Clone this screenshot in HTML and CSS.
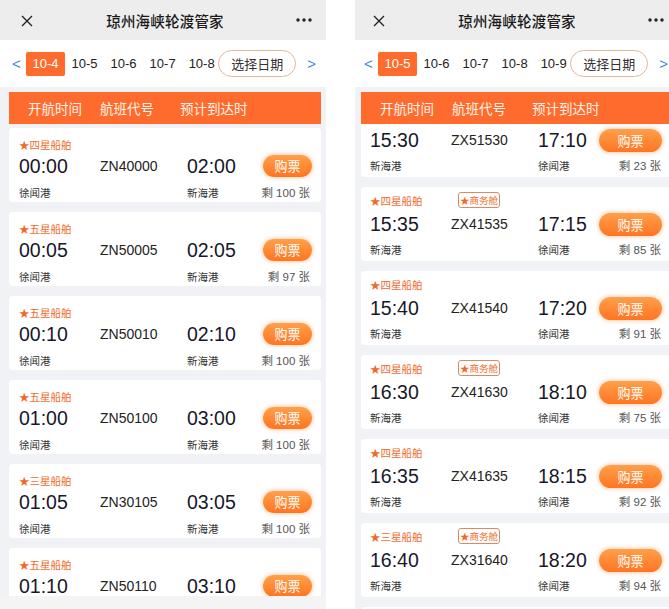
FILE: index.html
```html
<!DOCTYPE html>
<html lang="zh-CN">
<head>
<meta charset="utf-8">
<title>琼州海峡轮渡管家</title>
<link rel="stylesheet" href="styles.css">
</head>
<body>
<div class="screen">
  <div class="phone phone--a">
    <div class="inner">
      <div class="titlebar">
        <svg class="close" width="12" height="12" viewBox="0 0 12 12"><path d="M1 1L11 11M11 1L1 11" stroke="#222" stroke-width="1.4" fill="none"/></svg>
        <div class="title">琼州海峡轮渡管家</div>
        <svg class="more" width="16" height="4" viewBox="0 0 16 4"><circle cx="2" cy="2" r="1.7" fill="#222"/><circle cx="8" cy="2" r="1.7" fill="#222"/><circle cx="14" cy="2" r="1.7" fill="#222"/></svg>
      </div>
      <div class="datebar">
        <span class="arrow prev">&lt;</span>
        <span class="day active">10-4</span>
        <span class="day">10-5</span>
        <span class="day">10-6</span>
        <span class="day">10-7</span>
        <span class="day">10-8</span>
        <span class="pick">选择日期</span>
        <span class="arrow next">&gt;</span>
      </div>
      <div class="thead"><span class="th th1">开航时间</span><span class="th th2">航班代号</span><span class="th">预计到达时</span></div>
      <div class="list">
        <div class="card">
          <div class="r1"><span class="grade">★四星船舶</span></div>
          <div class="r2"><span class="c1 time">00:00</span><span class="c2 code">ZN40000</span><span class="c3 time">02:00</span><span class="buy">购票</span></div>
          <div class="r3"><span class="c1 port">徐闻港</span><span class="c2"></span><span class="c3 port">新海港</span><span class="left">剩 100 张</span></div>
        </div>
        <div class="card">
          <div class="r1"><span class="grade">★五星船舶</span></div>
          <div class="r2"><span class="c1 time">00:05</span><span class="c2 code">ZN50005</span><span class="c3 time">02:05</span><span class="buy">购票</span></div>
          <div class="r3"><span class="c1 port">徐闻港</span><span class="c2"></span><span class="c3 port">新海港</span><span class="left">剩 97 张</span></div>
        </div>
        <div class="card">
          <div class="r1"><span class="grade">★五星船舶</span></div>
          <div class="r2"><span class="c1 time">00:10</span><span class="c2 code">ZN50010</span><span class="c3 time">02:10</span><span class="buy">购票</span></div>
          <div class="r3"><span class="c1 port">徐闻港</span><span class="c2"></span><span class="c3 port">新海港</span><span class="left">剩 100 张</span></div>
        </div>
        <div class="card">
          <div class="r1"><span class="grade">★五星船舶</span></div>
          <div class="r2"><span class="c1 time">01:00</span><span class="c2 code">ZN50100</span><span class="c3 time">03:00</span><span class="buy">购票</span></div>
          <div class="r3"><span class="c1 port">徐闻港</span><span class="c2"></span><span class="c3 port">新海港</span><span class="left">剩 100 张</span></div>
        </div>
        <div class="card">
          <div class="r1"><span class="grade">★三星船舶</span></div>
          <div class="r2"><span class="c1 time">01:05</span><span class="c2 code">ZN30105</span><span class="c3 time">03:05</span><span class="buy">购票</span></div>
          <div class="r3"><span class="c1 port">徐闻港</span><span class="c2"></span><span class="c3 port">新海港</span><span class="left">剩 100 张</span></div>
        </div>
        <div class="card">
          <div class="r1"><span class="grade">★五星船舶</span></div>
          <div class="r2"><span class="c1 time">01:10</span><span class="c2 code">ZN50110</span><span class="c3 time">03:10</span><span class="buy">购票</span></div>
        </div>
      </div>
      <div class="bottombar"></div>
    </div>
  </div>

  <div class="phone phone--b">
    <div class="inner">
      <div class="titlebar">
        <svg class="close" width="12" height="12" viewBox="0 0 12 12"><path d="M1 1L11 11M11 1L1 11" stroke="#222" stroke-width="1.4" fill="none"/></svg>
        <div class="title">琼州海峡轮渡管家</div>
        <svg class="more" width="16" height="4" viewBox="0 0 16 4"><circle cx="2" cy="2" r="1.7" fill="#222"/><circle cx="8" cy="2" r="1.7" fill="#222"/><circle cx="14" cy="2" r="1.7" fill="#222"/></svg>
      </div>
      <div class="datebar">
        <span class="arrow prev">&lt;</span>
        <span class="day active">10-5</span>
        <span class="day">10-6</span>
        <span class="day">10-7</span>
        <span class="day">10-8</span>
        <span class="day">10-9</span>
        <span class="pick">选择日期</span>
        <span class="arrow next">&gt;</span>
      </div>
      <div class="thead"><span class="th th1">开航时间</span><span class="th th2">航班代号</span><span class="th">预计到达时</span></div>
      <div class="list">
        <div class="card first">
          <div class="r1"></div>
          <div class="r2"><span class="c1 time">15:30</span><span class="c2 code">ZX51530</span><span class="c3 time">17:10</span><span class="buy">购票</span></div>
          <div class="r3"><span class="c1 port">新海港</span><span class="c2"></span><span class="c3 port">徐闻港</span><span class="left">剩 23 张</span></div>
        </div>
        <div class="card">
          <div class="r1"><span class="c1 grade">★四星船舶</span><span class="badge">★商务舱</span></div>
          <div class="r2"><span class="c1 time">15:35</span><span class="c2 code">ZX41535</span><span class="c3 time">17:15</span><span class="buy">购票</span></div>
          <div class="r3"><span class="c1 port">新海港</span><span class="c2"></span><span class="c3 port">徐闻港</span><span class="left">剩 85 张</span></div>
        </div>
        <div class="card">
          <div class="r1"><span class="grade">★四星船舶</span></div>
          <div class="r2"><span class="c1 time">15:40</span><span class="c2 code">ZX41540</span><span class="c3 time">17:20</span><span class="buy">购票</span></div>
          <div class="r3"><span class="c1 port">新海港</span><span class="c2"></span><span class="c3 port">徐闻港</span><span class="left">剩 91 张</span></div>
        </div>
        <div class="card">
          <div class="r1"><span class="c1 grade">★四星船舶</span><span class="badge">★商务舱</span></div>
          <div class="r2"><span class="c1 time">16:30</span><span class="c2 code">ZX41630</span><span class="c3 time">18:10</span><span class="buy">购票</span></div>
          <div class="r3"><span class="c1 port">新海港</span><span class="c2"></span><span class="c3 port">徐闻港</span><span class="left">剩 75 张</span></div>
        </div>
        <div class="card">
          <div class="r1"><span class="grade">★四星船舶</span></div>
          <div class="r2"><span class="c1 time">16:35</span><span class="c2 code">ZX41635</span><span class="c3 time">18:15</span><span class="buy">购票</span></div>
          <div class="r3"><span class="c1 port">新海港</span><span class="c2"></span><span class="c3 port">徐闻港</span><span class="left">剩 92 张</span></div>
        </div>
        <div class="card">
          <div class="r1"><span class="c1 grade">★三星船舶</span><span class="badge">★商务舱</span></div>
          <div class="r2"><span class="c1 time">16:40</span><span class="c2 code">ZX31640</span><span class="c3 time">18:20</span><span class="buy">购票</span></div>
          <div class="r3"><span class="c1 port">新海港</span><span class="c2"></span><span class="c3 port">徐闻港</span><span class="left">剩 94 张</span></div>
        </div>
        <div class="card"></div>
      </div>
    </div>
  </div>
</div>
</body>
</html>
```

FILE: styles.css
```css
html, body {
  margin: 0;
  padding: 0;
  background: #fff;
}
body {
  width: 669px;
  height: 609px;
  overflow: hidden;
  font-family: "Liberation Sans", "Noto Sans CJK SC", sans-serif;
  color: #222;
}
.screen {
  display: flex;
  width: 669px;
  height: 609px;
  overflow: hidden;
}
.phone {
  flex: none;
  height: 609px;
  overflow: hidden;
  background: #f1f2f6;
}
.phone--a { width: 326px; }
.phone--b { width: 314px; margin-left: 29px; }
.inner {
  width: 326px;
  height: 609px;
  display: flex;
  flex-direction: column;
}
.phone--b .inner { margin-left: -3px; }

/* title bar */
.titlebar {
  flex: none;
  height: 40px;
  background: #ededed;
  display: grid;
  grid-template-columns: 1fr auto 1fr;
  align-items: center;
  padding: 0 14px 0 18px;
}
.close { margin-left: 3px; margin-top: 1px; }
.title {
  font-family: "Noto Sans CJK SC", sans-serif;
  font-size: 14.5px;
  font-weight: 500;
  color: #1a1a1a;
  letter-spacing: 0.2px;
  margin-top: 1px;
}
.more { justify-self: end; }

/* date bar */
.datebar {
  flex: none;
  height: 47px;
  background: #fff;
  display: flex;
  align-items: center;
  padding-left: 12px;
}
.arrow {
  font-size: 15px;
  color: #3a86db;
  font-family: "Liberation Sans", sans-serif;
}
.arrow.prev { width: 14px; }
.arrow.next { margin-left: 11px; }
.day {
  font-size: 13px;
  height: 24px;
  line-height: 24px;
  padding: 0 6.5px;
  color: #222;
}
.day.active {
  background: #ff6b2c;
  color: #fff;
  border-radius: 2px;
}
.pick {
  margin-left: -3px;
  height: 25px;
  line-height: 25px;
  padding: 0 12px;
  border: 1px solid #e7b49b;
  border-radius: 14px;
  font-family: "Noto Sans CJK SC", sans-serif;
  font-size: 13px;
  color: #333;
}

/* table head */
.thead {
  flex: none;
  margin: 5px 5px 0 9px;
  height: 32px;
  background: #ff6b2c;
  display: flex;
  align-items: center;
  padding-left: 19px;
  color: #fff3ec;
  font-family: "Noto Sans CJK SC", sans-serif;
  font-size: 13.5px;
}
.th1 { width: 72px; }
.th2 { width: 80px; }

/* list */
.list {
  flex: 1;
  min-height: 0;
  overflow: hidden;
  padding: 4px 5px 0 9px;
  display: flex;
  flex-direction: column;
  gap: 10px;
}
.phone--b .list { padding-top: 0; }
.card.first { margin-top: -21px; }
.bottombar {
  flex: none;
  height: 13px;
  background: #f4f4f5;
}

.card {
  flex: none;
  box-sizing: border-box;
  height: 74px;
  background: #fff;
  border-radius: 4px;
  padding: 10px 9px 3px 10px;
}
.phone--b .card { padding: 5px 11px 5px 9px; }
.r1, .r2, .r3 { display: flex; align-items: center; }
.r1 { height: 12px; }
.r2 { height: 24px; margin-top: 4px; }
.r3 { height: 14px; margin-top: 7px; }
.phone--b .r1 { height: 16px; }
.phone--b .r3 { margin-top: 6px; }

.c1 { width: 81px; flex: none; }
.c2 { width: 87px; flex: none; }
.c3 { flex: 1; }

.grade {
  font-family: "Noto Sans CJK SC", sans-serif;
  font-size: 10.5px;
  color: #f26a2b;
  white-space: nowrap;
}
.badge {
  margin-left: 7px;
  font-family: "Noto Sans CJK SC", sans-serif;
  font-size: 9.5px;
  line-height: 14px;
  padding: 0 1px;
  border: 1px solid #d98b63;
  border-radius: 3px;
  color: #ee6a28;
  background: #fff;
}
.time {
  font-size: 19.5px;
  color: #17172a;
}
.code {
  font-size: 14px;
  color: #222;
}
.buy {
  flex: none;
  width: 49px;
  height: 22px;
  line-height: 22px;
  text-align: center;
  border-radius: 11px;
  background: linear-gradient(180deg, #ffa04a, #ff7522);
  box-shadow: 0 0 5px rgba(255, 125, 40, 0.55);
  color: #fff;
  font-family: "Noto Sans CJK SC", sans-serif;
  font-size: 13px;
}
.phone--b .buy {
  width: 63px;
  height: 23px;
  line-height: 23px;
  border-radius: 12px;
}
.port {
  font-family: "Noto Sans CJK SC", sans-serif;
  font-size: 10.5px;
  color: #333;
}
.left {
  flex: none;
  margin-right: 2px;
  font-size: 11.5px;
  color: #555;
  font-family: "Liberation Sans", "Noto Sans CJK SC", sans-serif;
}
.phone--b .left { margin-right: 1px; }
```
